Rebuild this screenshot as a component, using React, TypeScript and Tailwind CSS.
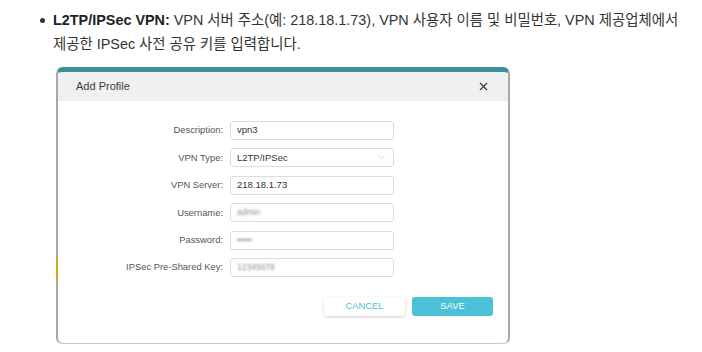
import { ChevronDown, X } from 'lucide-react'

const rows = [
  { label: 'Description:', value: 'vpn3' },
  { label: 'VPN Type:', value: 'L2TP/IPSec', select: true },
  { label: 'VPN Server:', value: '218.18.1.73' },
  { label: 'Username:', value: 'admin', blur: true },
  { label: 'Password:', value: '•••••', blur: true },
  { label: 'IPSec Pre-Shared Key:', value: '12345678', blur: true },
]

function ProfileModal() {
  return (
    <div className="relative ml-[56px] mt-[11px] h-[277px] w-[454px] rounded-t-[7px] rounded-b-[6px] border-x-2 border-t-[5px] border-b border-x-[#a8a8a8] border-t-[#3a8f98] border-b-[#c8c8c8] bg-[#f4f4f4]">
      {/* yellow marker on the left edge */}
      <div className="absolute left-[-2px] top-[186px] h-[22px] w-[2px] bg-[#d4a520]" />

      <div className="flex h-full flex-col overflow-hidden rounded-[6px] bg-white font-['Liberation_Sans',Arial,sans-serif]">
        <div className="flex h-[29px] items-center justify-between bg-[#f0f0f0] pl-[18px] pr-[18px]">
          <span className="text-[11px] text-[#3a3a3a]">Add Profile</span>
          <X size={13} strokeWidth={2} className="text-[#333]" />
        </div>

        <div className="mt-[20px] flex flex-col gap-[8.4px]">
          {rows.map((r) => (
            <div key={r.label} className="flex items-center">
              <div className="w-[165px] text-right text-[9.4px] text-[#555]">{r.label}</div>
              <div className="ml-[7px] flex h-[19px] w-[164px] items-center justify-between rounded-[3px] border border-[#dcdcdc] px-[6px]">
                <span
                  className={
                    r.blur
                      ? 'text-[8.5px] text-[#8a8a8a] blur-[0.9px]'
                      : 'text-[9.5px] text-[#333]'
                  }
                >
                  {r.value}
                </span>
                {r.select && <ChevronDown size={11} strokeWidth={1.2} className="text-[#b0b0b0]" />}
              </div>
            </div>
          ))}
        </div>

        <div className="mt-[20px] flex justify-end gap-[7px] pr-[15px]">
          <button className="h-[19px] w-[81px] rounded-[3px] bg-white text-[9.4px] text-[#4fbfd3] shadow-[0_1px_3px_rgba(0,0,0,0.2)]">
            CANCEL
          </button>
          <button className="h-[19px] w-[81px] rounded-[3px] bg-[#4ac1d6] text-[9.4px] text-white">
            SAVE
          </button>
        </div>
      </div>
    </div>
  )
}

export default function App() {
  return (
    <div className="h-[352px] w-[702px] overflow-hidden bg-white">
      <ul className="pt-2 pl-[53px] pr-[10px] font-['Liberation_Sans','Noto_Sans_CJK_KR',sans-serif] text-[14.4px] leading-[24px] text-[#333]">
        <li className="relative">
          <span className="absolute left-[-13px] top-[10px] h-[5px] w-[5px] rounded-full bg-[#333]" />
          <b className="font-bold text-[#222]">L2TP/IPSec VPN:</b> VPN 서버 주소(예: 218.18.1.73), VPN 사용자 이름 및 비밀번호, VPN 제공업체에서
          <br />
          제공한 IPSec 사전 공유 키를 입력합니다.
        </li>
      </ul>
      <ProfileModal />
    </div>
  )
}
